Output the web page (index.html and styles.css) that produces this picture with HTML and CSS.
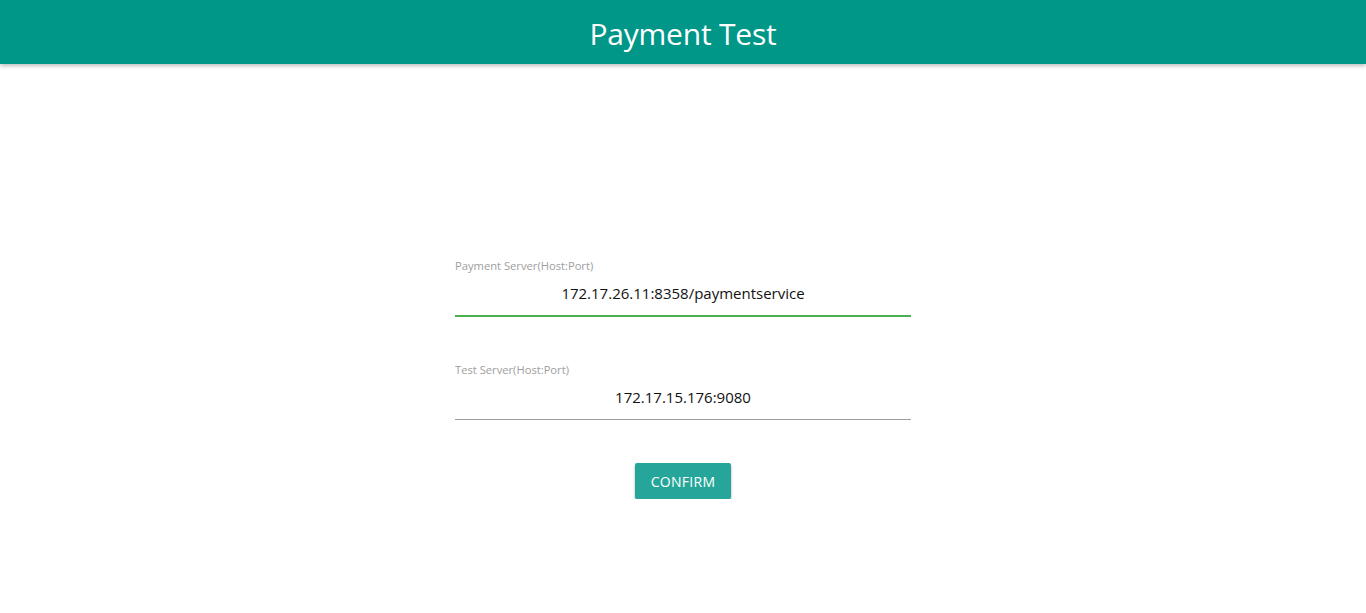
FILE: index.html
```html
<!DOCTYPE html>
<html>
<head>
<meta charset="utf-8">
<title>Payment Test</title>
<link rel="stylesheet" href="styles.css">
</head>
<body>
<header class="topbar">
  <h1 class="title">Payment Test</h1>
</header>
<main class="main">
  <form class="form">
    <div class="field">
      <label class="label">Payment Server(Host:Port)</label>
      <input class="input input-active" type="text" value="172.17.26.11:8358/paymentservice">
    </div>
    <div class="field">
      <label class="label">Test Server(Host:Port)</label>
      <input class="input" type="text" value="172.17.15.176:9080">
    </div>
    <div class="actions">
      <button class="btn" type="button">CONFIRM</button>
    </div>
  </form>
</main>
</body>
</html>
```
FILE: styles.css
```css
* { box-sizing: border-box; }
html, body { margin: 0; padding: 0; background: #fff; }
body { font-family: "Open Sans", "Noto Sans", "Liberation Sans", sans-serif; }
.topbar {
  height: 64px;
  background: #009688;
  display: flex;
  align-items: center;
  justify-content: center;
  box-shadow: 0 2px 4px rgba(0,0,0,0.25);
  position: relative;
}
.title {
  margin: 0;
  padding-top: 3px;
  color: #fff;
  font-weight: 400;
  font-size: 30px;
  line-height: 40px;
  letter-spacing: -0.2px;
}
.main {
  display: flex;
  justify-content: center;
  padding-top: 194px;
}
.form {
  width: 456px;
  display: flex;
  flex-direction: column;
  gap: 44px;
}
.field { display: flex; flex-direction: column; }
.label {
  font-size: 11.2px;
  line-height: 16px;
  color: #9e9e9e;
}
.field + .field .label { padding-top: 1px; }
.input {
  height: 43px;
  border: none;
  border-bottom: 1px solid #9e9e9e;
  outline: none;
  padding: 0 0 4px 0;
  font-family: inherit;
  font-size: 15px;
  color: #111;
  text-align: center;
  background: transparent;
}
.field + .field .input { height: 42px; padding-bottom: 3px; }
.input-active { border-bottom: 2px solid #4caf50; }
.actions { display: flex; justify-content: center; margin-top: -1px; }
.btn {
  width: 96px;
  height: 36px;
  border: none;
  border-radius: 2px;
  background: #26a69a;
  color: #fff;
  font-family: inherit;
  font-size: 14px;
  letter-spacing: 0.3px;
  box-shadow: 0 2px 3px rgba(0,0,0,0.2), 0 1px 2px rgba(0,0,0,0.14);
  cursor: pointer;
}
```
